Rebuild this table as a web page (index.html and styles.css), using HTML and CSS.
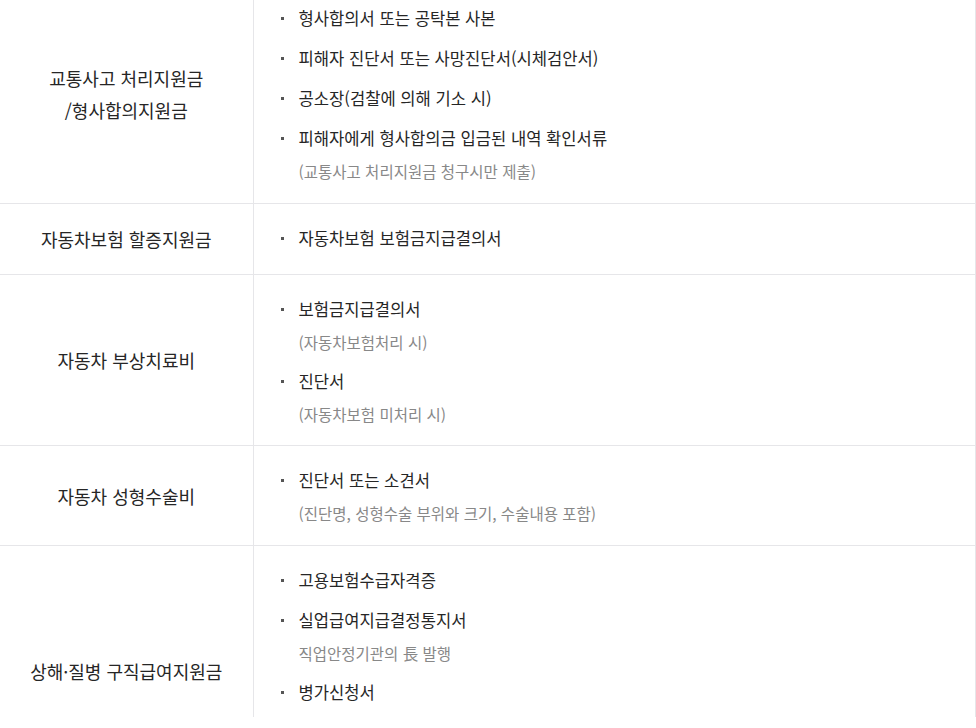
FILE: index.html
```html
<!DOCTYPE html>
<html lang="ko">
<head>
<meta charset="utf-8">
<link rel="stylesheet" href="styles.css">
</head>
<body>
<div class="viewport">
  <table class="doc-table">
    <colgroup>
      <col class="col-label">
      <col class="col-docs">
    </colgroup>
    <tbody>
      <tr class="row-first">
        <th>교통사고 처리지원금<br>/형사합의지원금</th>
        <td>
          <ul class="docs">
            <li>형사합의서 또는 공탁본 사본</li>
            <li>피해자 진단서 또는 사망진단서(시체검안서)</li>
            <li>공소장(검찰에 의해 기소 시)</li>
            <li class="has-note">피해자에게 형사합의금 입금된 내역 확인서류<p class="note">(교통사고 처리지원금 청구시만 제출)</p></li>
          </ul>
        </td>
      </tr>
      <tr>
        <th>자동차보험 할증지원금</th>
        <td>
          <ul class="docs">
            <li>자동차보험 보험금지급결의서</li>
          </ul>
        </td>
      </tr>
      <tr>
        <th>자동차 부상치료비</th>
        <td>
          <ul class="docs">
            <li class="has-note">보험금지급결의서<p class="note">(자동차보험처리 시)</p></li>
            <li class="has-note">진단서<p class="note">(자동차보험 미처리 시)</p></li>
          </ul>
        </td>
      </tr>
      <tr class="row-surgery">
        <th>자동차 성형수술비</th>
        <td>
          <ul class="docs">
            <li class="has-note">진단서 또는 소견서<p class="note">(진단명, 성형수술 부위와 크기, 수술내용 포함)</p></li>
          </ul>
        </td>
      </tr>
      <tr class="row-last">
        <th>상해·질병 구직급여지원금</th>
        <td>
          <ul class="docs">
            <li>고용보험수급자격증</li>
            <li class="has-note">실업급여지급결정통지서<p class="note">직업안정기관의 長 발행</p></li>
            <li>병가신청서</li>
          </ul>
        </td>
      </tr>
    </tbody>
  </table>
</div>
</body>
</html>
```

FILE: styles.css
```css
html, body {
  margin: 0;
  padding: 0;
  background: #fff;
}
body {
  font-family: "Noto Sans CJK KR", "Noto Sans", sans-serif;
  color: #333;
}
.viewport {
  height: 717px;
  overflow: hidden;
}
.doc-table {
  width: 976px;
  margin-top: -16px;
  border-collapse: collapse;
  table-layout: fixed;
  border-right: 1px solid #e6e6e9;
}
.col-label { width: 253px; }
.doc-table tr {
  border-bottom: 1px solid #e6e6e9;
}
.doc-table .row-first td {
  padding-bottom: 25px;
}
.doc-table .row-surgery td {
  padding-top: 22px;
  padding-bottom: 25px;
}
.doc-table .row-last td {
  padding-top: 22px;
  padding-bottom: 92px;
}
.doc-table th {
  font-weight: normal;
  font-size: 18px;
  line-height: 32px;
  color: #262626;
  text-align: center;
  vertical-align: middle;
  border-right: 1px solid #e6e6e9;
  padding: 0 8px;
}
.doc-table td {
  padding: 22px 20px 24px 27px;
  vertical-align: middle;
}
.docs {
  list-style: none;
  margin: 0;
  padding: 0;
}
.docs li {
  position: relative;
  padding-left: 18px;
  font-size: 16.6px;
  line-height: 24px;
  color: #262626;
}
.docs li + li {
  margin-top: 16px;
}
.docs li.has-note + li {
  margin-top: 20px;
}
.docs li::before {
  content: "";
  position: absolute;
  left: 0;
  top: 11px;
  width: 3px;
  height: 3px;
  background: #555;
}
.note {
  margin: 14px 0 0;
  font-size: 15.5px;
  line-height: 14px;
  color: #888;
}
```
